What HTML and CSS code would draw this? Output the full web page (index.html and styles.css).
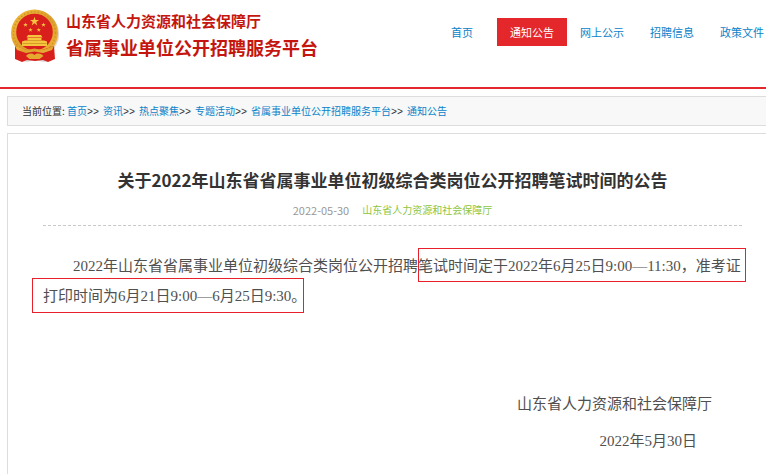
FILE: index.html
```html
<!DOCTYPE html>
<html lang="zh-CN">
<head>
<meta charset="utf-8">
<meta name="viewport" content="width=device-width, initial-scale=1">
<title>通知公告</title>
<link rel="stylesheet" href="styles.css">
</head>
<body>
<header class="header">
  <div class="brand">
    <svg class="emblem" viewBox="0 0 50 54" aria-hidden="true">
      <defs>
        <linearGradient id="gold" x1="0" y1="0" x2="1" y2="1">
          <stop offset="0" stop-color="#f3bd3c"/>
          <stop offset=".5" stop-color="#dda02c"/>
          <stop offset="1" stop-color="#f0b43a"/>
        </linearGradient>
        <path id="star" d="M0-1 .23-.31 .95-.31 .36.12 .59.81 0 .38-.59.81-.36.12-.95-.31-.23-.31Z"/>
      </defs>
      <path d="M9 40 8 51 17 53 25 51 34 53 43 51 42 40Z" fill="#bbb" opacity=".6"/>
      <circle cx="25.600" cy="25" r="23.500" fill="#c9c0b4" opacity=".6"/>
      <circle cx="24.500" cy="24" r="23.500" fill="url(#gold)"/>
      <circle cx="24.500" cy="24" r="21" fill="none" stroke="#cf9429" stroke-width="1.500" stroke-dasharray="1.500 2"/>
      <circle cx="24.500" cy="23" r="18.300" fill="#d91f1c"/>
      <g fill="#f6c53e">
        <use href="#star" transform="translate(24.500 12.500) scale(4.800)"/>
        <use href="#star" transform="translate(15.500 15.800) scale(2.400)"/>
        <use href="#star" transform="translate(33.500 15.800) scale(2.400)"/>
        <use href="#star" transform="translate(20.500 21) scale(2.300)"/>
        <use href="#star" transform="translate(28.800 21) scale(2.300)"/>
        <path d="M18 26h13l1.500 2.500h-16zM17.500 29h14v2.500h2.500l3 1v4.500H12v-4.500l3-1h2.500z"/>
      </g>
      <path d="M12.500 34.500h24M17 31.500h15" stroke="#c98a20" stroke-width=".7"/>
      <path d="M5 37 17 41h15l12-4 1 13-7 3-5-2-8 1-8-1-5 2-7-3z" fill="#d91f1c"/>
      <path d="M5 37c5 1 8 3 12 4l7.500-1.500L32 41c5-1 8-3 12-4l-2 4-9 3-8.500-1.500L16 44l-9-3z" fill="url(#gold)"/>
      <path d="M16 47c3-3 6-3 8.500-1 2.500-2 6-2 9 1l-4 3h-10z" fill="#e5a931"/>
    </svg>
    <div class="brand-text">
      <div class="brand-org">山东省人力资源和社会保障厅</div>
      <div class="brand-name">省属事业单位公开招聘服务平台</div>
    </div>
  </div>
  <nav class="nav">
    <a class="nav-link nav-home" href="#">首页</a>
    <a class="nav-link active" href="#">通知公告</a>
    <a class="nav-link" href="#">网上公示</a>
    <a class="nav-link" href="#">招聘信息</a>
    <a class="nav-link" href="#">政策文件</a>
  </nav>
</header>
<div class="crumbs">当前位置: <a href="#">首页</a><span class="sep">&gt;&gt;</span><a href="#">资讯</a><span class="sep">&gt;&gt;</span><a href="#">热点聚焦</a><span class="sep">&gt;&gt;</span><a href="#">专题活动</a><span class="sep">&gt;&gt;</span><a href="#">省属事业单位公开招聘服务平台</a><span class="sep">&gt;&gt;</span><a href="#">通知公告</a></div>
<main class="article">
  <h1 class="title">关于2022年山东省省属事业单位初级综合类岗位公开招聘笔试时间的公告</h1>
  <div class="meta"><time datetime="2022-05-30">2022-05-30</time><span class="source">山东省人力资源和社会保障厅</span></div>
  <div class="content">
    <p class="text">2022年山东省省属事业单位初级综合类岗位公开招聘笔试时间定于2022年6月25日9:00—11:30，准考证打印时间为6月21日9:00—6月25日9:30。</p>
    <span class="mark mark-exam"></span>
    <span class="mark mark-print"></span>
  </div>
  <div class="sign">
    <p class="sign-org">山东省人力资源和社会保障厅</p>
    <p class="sign-date">2022年5月30日</p>
  </div>
</main>
</body>
</html>
```
FILE: styles.css
```css
* {
  box-sizing: border-box;
}

body {
  display: flex;
  flex-direction: column;
  min-height: 100vh;
  margin: 0;
  background: #fff;
  color: #333;
  font-family: "Noto Sans CJK SC", sans-serif;
}

a {
  color: #0a82c8;
  text-decoration: none;
}

p {
  margin: 0;
}

.header {
  display: flex;
  justify-content: space-between;
  align-items: flex-start;
  padding: 9px 0 24px 10px;
  border-bottom: 2px solid #e4272a;
}

.brand {
  display: flex;
  flex: none;
  gap: 6px;
}

.emblem {
  width: 50px;
  height: 54px;
}

.brand-text {
  color: #c4160f;
  font-weight: 700;
  white-space: nowrap;
}

.brand-org {
  font-size: 15px;
  line-height: 24px;
}

.brand-name {
  font-size: 18px;
  line-height: 28px;
}

.nav {
  display: flex;
  flex: none;
  margin-top: 9px;
  font-size: 11px;
  line-height: 28px;
}

.nav-link {
  padding: 0 13px;
}

.nav-link:last-child {
  padding-right: 2px;
}

.nav-home {
  margin-right: 11px;
}

.nav .active {
  background: #e4272a;
  color: #fff;
}

.crumbs {
  margin: 7px 0 7px 7px;
  padding: 0 14px;
  border: 1px solid #ddd;
  border-right: 0;
  background: #f8f8f8;
  font-size: 10px;
  line-height: 28px;
}

.sep {
  margin-right: 4px;
  font-family: "Liberation Mono", monospace;
  line-height: 1;
}

.article {
  flex: 1;
  margin-left: 7px;
  padding: 32px 24px 16px 35px;
  border: 1px solid #ddd;
  border-width: 1px 0 0 1px;
}

.title {
  margin: 0;
  font-size: 17px;
  font-weight: 700;
  line-height: 28px;
  text-align: center;
}

.meta {
  display: flex;
  justify-content: center;
  align-items: center;
  gap: 13px;
  padding: 6px 0 5px;
  border-bottom: 1px dashed #c8c8c8;
  color: #999;
  font-size: 11px;
  line-height: 20px;
}

.source {
  color: #8cc63f;
  font-size: 10px;
}

.content,
.sign {
  color: #505050;
  font-family: "Liberation Serif", "Noto Sans CJK SC", serif;
  font-size: 15px;
  line-height: 30px;
}

.content {
  position: relative;
  margin-top: 25px;
}

.text {
  text-indent: 30px;
}

.mark {
  position: absolute;
  border: 1px solid #e8202a;
}

.mark-exam {
  top: -3px;
  right: -4px;
  width: 328px;
  height: 34px;
}

.mark-print {
  top: 27px;
  left: -11px;
  width: 272px;
  height: 35px;
}

.sign {
  margin-top: 78px;
  text-align: right;
}

.sign-org {
  padding-right: 30px;
}

.sign-date {
  margin-top: 7px;
  padding-right: 45px;
}
```
